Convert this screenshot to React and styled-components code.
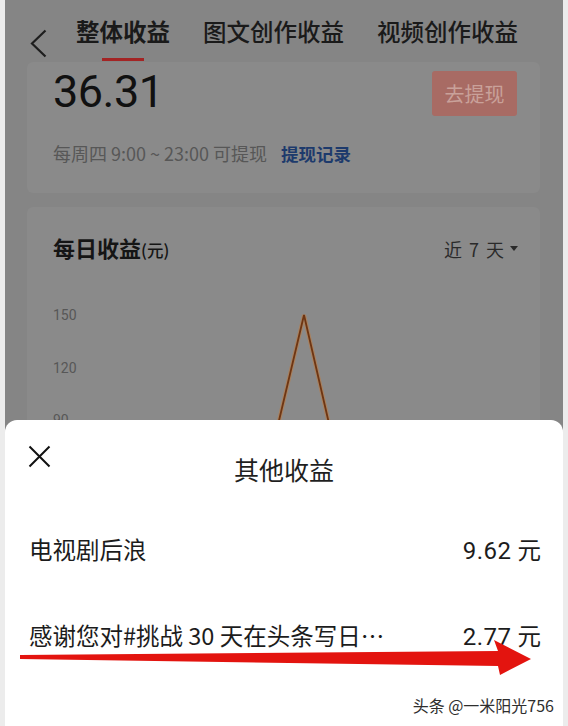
import React from "react";
import styled, { createGlobalStyle } from "styled-components";

const CJK = `"Noto Sans CJK SC", "Noto Sans", sans-serif`;
const NUM = `Roboto, "Noto Sans CJK SC", sans-serif`;

const Global = createGlobalStyle`
  html, body { margin: 0; padding: 0; background: #ececec; }
  body { font-family: ${CJK}; }
  * { box-sizing: border-box; }
`;

const Screen = styled.div`
  position: relative;
  width: 568px;
  height: 726px;
  overflow: hidden;
  background: #ececec;
`;

const Page = styled.div`
  margin: 0 5px;
  height: 726px;
  background: #858585;
  display: flex;
  flex-direction: column;
`;

const Header = styled.div`
  display: flex;
  align-items: flex-start;
  height: 62px;
  padding-left: 25px;
`;

const Back = styled.svg`
  width: 17px;
  height: 29px;
  margin-top: 29px;
  margin-right: 29px;
  flex: none;
`;

const Tabs = styled.div`
  display: flex;
  gap: 33px;
`;

const Tab = styled.div`
  display: flex;
  flex-direction: column;
  align-items: center;
  padding-top: 18px;
`;

const TabText = styled.span`
  font-size: 23.5px;
  line-height: 26px;
  font-weight: ${(p) => (p.$active ? 700 : 500)};
  color: #1a1a1a;
  white-space: nowrap;
`;

const TabLine = styled.span`
  width: 42px;
  height: 3px;
  margin-top: 14px;
  background: ${(p) => (p.$active ? "#a32424" : "transparent")};
`;

const Card = styled.div`
  margin: ${(p) => p.$mt || 0}px 23px 0 22px;
  background: #8a8a8a;
  border-radius: 6px;
`;

const BalanceCard = styled(Card)`
  padding: 4px 23px 26px 26px;
`;

const TopRow = styled.div`
  display: flex;
  justify-content: space-between;
  align-items: flex-start;
`;

const Amount = styled.div`
  font-family: ${NUM};
  font-size: 45px;
  line-height: 52px;
  color: #111;
  letter-spacing: -0.5px;
`;

const Withdraw = styled.div`
  margin-top: 5px;
  width: 85px;
  height: 45px;
  border-radius: 3px;
  background: #a86b64;
  color: #c9a19a;
  font-size: 20px;
  display: flex;
  align-items: center;
  justify-content: center;
`;

const SubRow = styled.div`
  margin-top: 22px;
  font-size: 18px;
  line-height: 26px;
  color: #575757;
  white-space: nowrap;
`;

const Link = styled.span`
  margin-left: 14px;
  font-size: 17.5px;
  color: #1d3a6c;
  font-weight: 700;
`;

const ChartCard = styled(Card)`
  position: relative;
  flex: 1;
  padding: 25px 22px 0 26px;
`;

const ChartHead = styled.div`
  display: flex;
  justify-content: space-between;
  align-items: center;
  line-height: 30px;
`;

const ChartTitle = styled.div`
  font-size: 22px;
  font-weight: 700;
  color: #151515;
`;

const Unit = styled.span`
  font-size: 16.5px;
  font-weight: 500;
`;

const Range = styled.div`
  display: flex;
  align-items: center;
  gap: 6px;
  font-size: 18px;
  color: #2a2a2a;
  word-spacing: 3px;
`;

const YAxis = styled.div`
  margin-top: 24px;
  display: flex;
  flex-direction: column;
`;

const YLabel = styled.div`
  height: 52.5px;
  line-height: 52.5px;
  font-family: ${NUM};
  font-size: 14px;
  color: #575757;
`;

const ChartSvg = styled.svg`
  position: absolute;
  left: 0;
  top: 0;
  width: 513px;
  height: 260px;
  overflow: visible;
`;

const Sheet = styled.div`
  position: absolute;
  left: 5px;
  right: 5px;
  top: 420px;
  bottom: 0;
  background: #fff;
  border-radius: 12px 12px 0 0;
`;

const SheetHead = styled.div`
  display: grid;
  grid-template-columns: 60px 1fr 60px;
  padding-top: 25px;
`;

const Close = styled.svg`
  width: 23px;
  height: 23px;
  margin-left: 23px;
`;

const SheetTitle = styled.div`
  margin-top: 5.5px;
  text-align: center;
  font-size: 25px;
  line-height: 36px;
  color: #1f1f1f;
`;

const List = styled.div`
  margin-top: 19.5px;
  padding: 0 22px 0 24px;
`;

const Row = styled.div`
  height: 86px;
  display: flex;
  align-items: center;
  justify-content: space-between;
  font-size: 23.5px;
  color: #1c1c1c;
  white-space: nowrap;
`;

const Value = styled.span`
  font-family: ${NUM};
  font-size: 24px;
  letter-spacing: 0.5px;
`;

const Yuan = styled.span`
  font-family: ${CJK};
  font-size: 23.5px;
  margin-left: 6px;
`;

const Arrow = styled.svg`
  position: absolute;
  left: 0;
  top: 630px;
  width: 568px;
  height: 60px;
`;

const Watermark = styled.div`
  position: absolute;
  right: 14px;
  bottom: 9px;
  font-size: 16px;
  color: #2e2e2e;
  text-shadow: 0 0 2px #fff;
  white-space: nowrap;
`;

const tabs = ["整体收益", "图文创作收益", "视频创作收益"];
const rows = [
  ["电视剧后浪", "9.62"],
  ["感谢您对#挑战 30 天在头条写日…", "2.77"],
];

export default function App() {
  return (
    <Screen>
      <Global />
      <Page>
        <Header>
          <Back viewBox="0 0 17 29">
            <polyline points="15.5,1.5 2,14.5 15.5,27.5" fill="none" stroke="#1e1e1e" strokeWidth="2.2" />
          </Back>
          <Tabs>
            {tabs.map((t, i) => (
              <Tab key={t}>
                <TabText $active={i === 0}>{t}</TabText>
                <TabLine $active={i === 0} />
              </Tab>
            ))}
          </Tabs>
        </Header>

        <BalanceCard>
          <TopRow>
            <Amount>36.31</Amount>
            <Withdraw>去提现</Withdraw>
          </TopRow>
          <SubRow>
            每周四 9:00 ~ 23:00 可提现<Link>提现记录</Link>
          </SubRow>
        </BalanceCard>

        <ChartCard $mt={14}>
          <ChartSvg viewBox="0 0 513 260">
            <polyline points="241,260 277,108 312,260" fill="none" stroke="#c07a3e" strokeWidth="4" strokeOpacity="0.55" />
            <polyline points="241,260 277,108 312,260" fill="none" stroke="#6e3512" strokeWidth="1.8" />
          </ChartSvg>
          <ChartHead>
            <ChartTitle>
              每日收益<Unit>(元)</Unit>
            </ChartTitle>
            <Range>
              近 7 天
              <svg width="8" height="6" viewBox="0 0 8 6">
                <polygon points="0,0 8,0 4,5" fill="#2a2a2a" />
              </svg>
            </Range>
          </ChartHead>
          <YAxis>
            <YLabel>150</YLabel>
            <YLabel>120</YLabel>
            <YLabel>90</YLabel>
          </YAxis>
        </ChartCard>
      </Page>

      <Sheet>
        <SheetHead>
          <Close viewBox="0 0 23 23">
            <path d="M1.5 1.5 L21.5 21.5 M21.5 1.5 L1.5 21.5" stroke="#111" strokeWidth="2" fill="none" />
          </Close>
          <SheetTitle>其他收益</SheetTitle>
        </SheetHead>
        <List>
          {rows.map(([name, v]) => (
            <Row key={name}>
              <span>{name}</span>
              <span>
                <Value>{v}</Value>
                <Yuan>元</Yuan>
              </span>
            </Row>
          ))}
        </List>
      </Sheet>

      <Arrow viewBox="0 0 568 60">
        <polygon
          points="20,25 498,21 494,10 531,29 500,45 498,36 20,29"
          fill="#e3140f"
        />
      </Arrow>

      <Watermark>头条 @一米阳光756</Watermark>
    </Screen>
  );
}
